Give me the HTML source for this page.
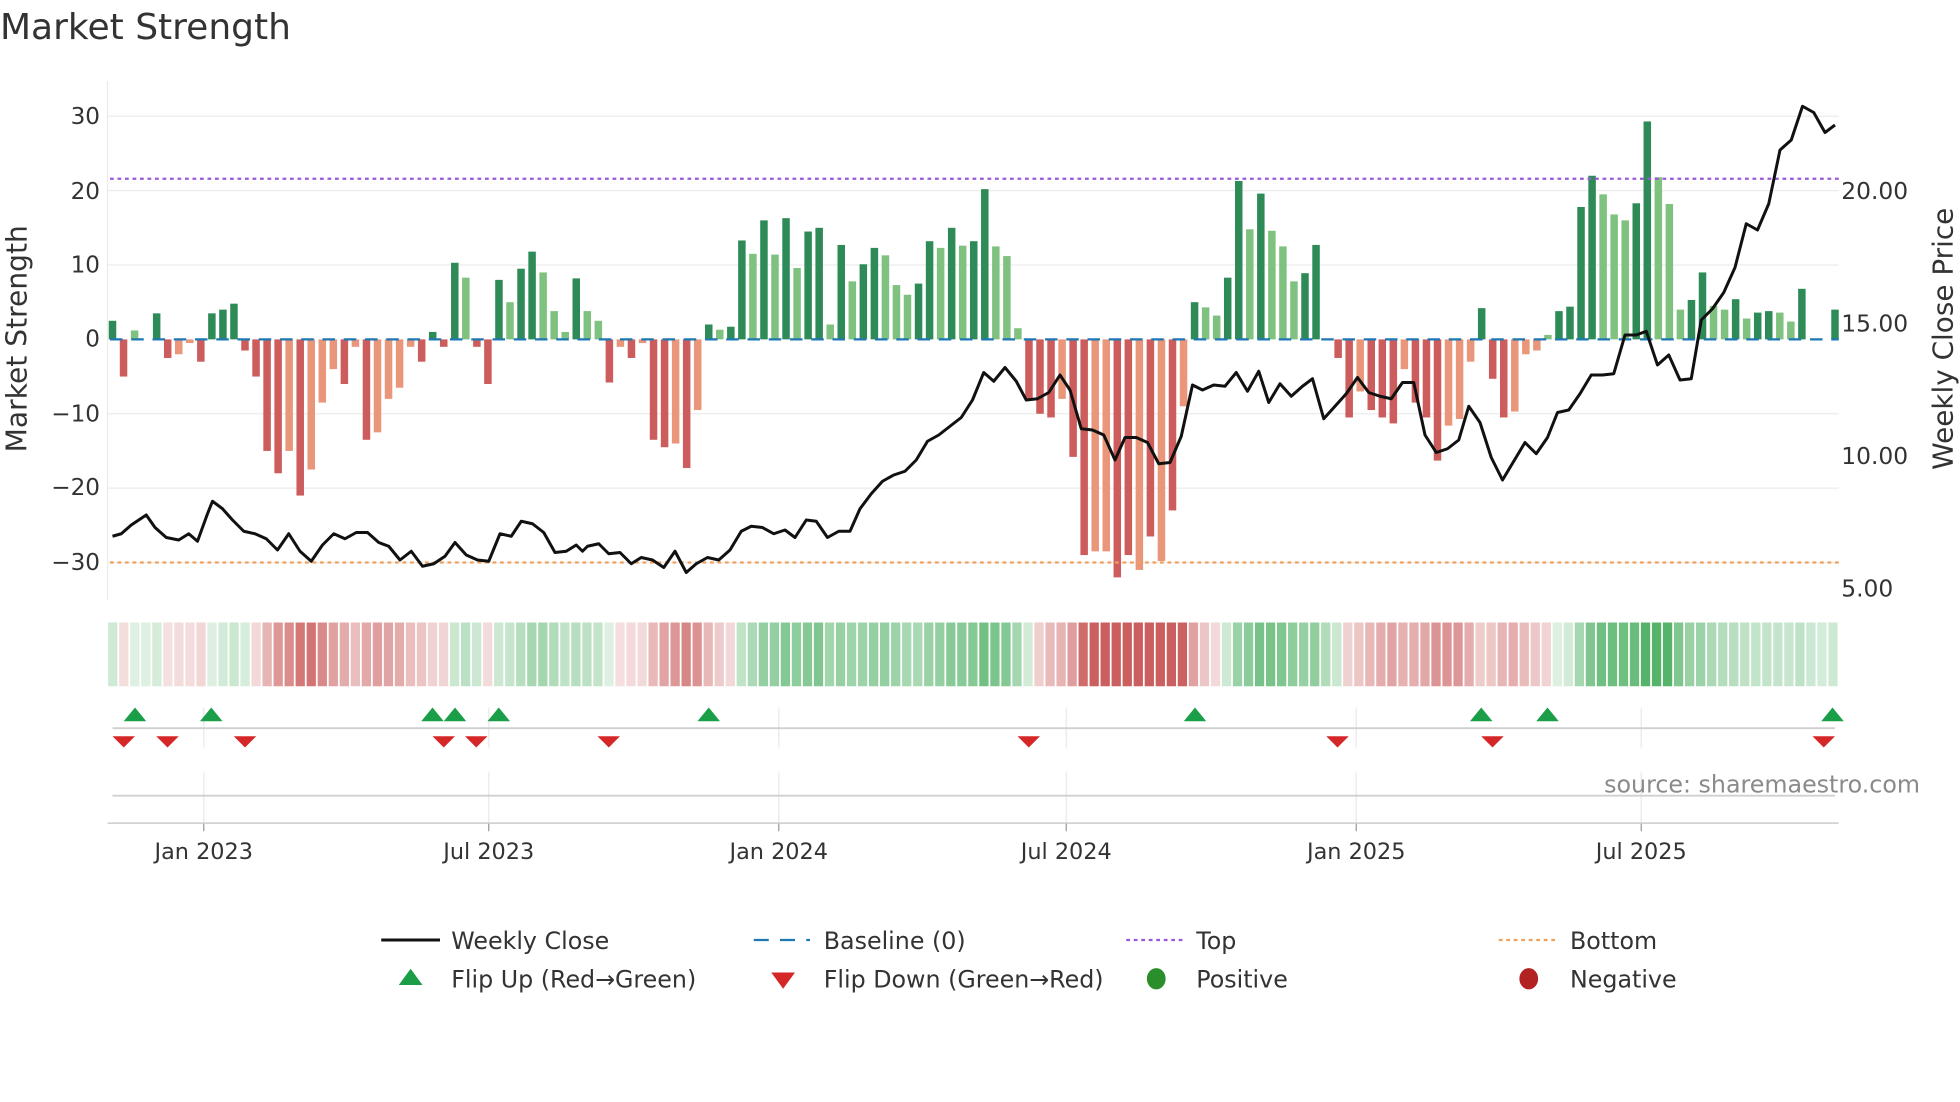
<!DOCTYPE html>
<html><head><meta charset="utf-8"><style>
html,body{margin:0;padding:0;background:#fff;width:1960px;height:1102px;overflow:hidden}
svg{display:block}
text{font-family:"DejaVu Sans","Liberation Sans",sans-serif;fill:#333}
</style></head><body>
<svg id="s" width="1960" height="1102" viewBox="0 0 1568 881.6" xmlns="http://www.w3.org/2000/svg">
<text x="0" y="31" font-size="28.8">Market Strength</text>
<g id="grid"></g>
<g id="heat"></g>
<g id="bars"></g>
<line x1="88" x2="1471" y1="271.5" y2="271.5" stroke="#1f77b4" stroke-width="1.8" stroke-dasharray="10,7"/>
<line x1="88" x2="1471" y1="143" y2="143" stroke="#9b59d9" stroke-width="1.8" stroke-dasharray="3,3"/>
<line x1="88" x2="1471" y1="450" y2="450" stroke="#f0a05a" stroke-width="1.8" stroke-dasharray="3,3"/>
<polyline id="price" fill="none" stroke="#111" stroke-width="2.4" stroke-linejoin="round"/>
<g id="flips"></g>
<g font-size="18.5" text-anchor="end">
<text x="80" y="99">30</text><text x="80" y="159">20</text><text x="80" y="218">10</text><text x="80" y="277">0</text>
<text x="80" y="337">−10</text><text x="80" y="396">−20</text><text x="80" y="456">−30</text>
</g>
<g font-size="18.7">
<text x="1473" y="159">20.00</text><text x="1473" y="265">15.00</text><text x="1473" y="371">10.00</text><text x="1473" y="477">5.00</text>
</g>
<text transform="translate(21,271) rotate(-90)" font-size="22.5" text-anchor="middle">Market Strength</text>
<text transform="translate(1562,271) rotate(-90)" font-size="22.3" text-anchor="middle">Weekly Close Price</text>
<text x="1536" y="634" font-size="19" text-anchor="end" style="fill:#8a8a8a">source: sharemaestro.com</text>
<g font-size="17.9" text-anchor="middle">
<text x="163" y="687">Jan 2023</text><text x="391" y="687">Jul 2023</text><text x="623" y="687">Jan 2024</text>
<text x="853" y="687">Jul 2024</text><text x="1085" y="687">Jan 2025</text><text x="1313" y="687">Jul 2025</text>
</g>
<g font-size="19">
<line x1="305" x2="352" y1="752" y2="752" stroke="#111" stroke-width="2.4"/><text x="361" y="759">Weekly Close</text>
<line x1="603" x2="648" y1="752" y2="752" stroke="#1f77b4" stroke-width="1.8" stroke-dasharray="12,9"/><text x="659" y="759">Baseline (0)</text>
<line x1="901" x2="946" y1="752" y2="752" stroke="#9b59d9" stroke-width="1.8" stroke-dasharray="3,3"/><text x="957" y="759">Top</text>
<line x1="1199" x2="1244" y1="752" y2="752" stroke="#f0a05a" stroke-width="1.8" stroke-dasharray="3,3"/><text x="1256" y="759">Bottom</text>
<polygon points="319,788 338,788 328.5,775" fill="#1a9e47"/><text x="361" y="790">Flip Up (Red→Green)</text>
<polygon points="617,778 636,778 626.5,791" fill="#d62728"/><text x="659" y="790">Flip Down (Green→Red)</text>
<ellipse cx="925" cy="783" rx="7.5" ry="8.5" fill="#2a8f2a"/><text x="957" y="790">Positive</text>
<ellipse cx="1223" cy="783" rx="7.5" ry="8.5" fill="#b22222"/><text x="1256" y="790">Negative</text>
</g>
</svg>
<script>
const NS="http://www.w3.org/2000/svg";
function el(p,t,a){const e=document.createElementNS(NS,t);for(const k in a)e.setAttribute(k,a[k]);p.appendChild(e);return e;}
const V=[2.5,-5,1.2,0,3.5,-2.5,-2,-0.5,-3,3.5,4,4.8,-1.5,-5,-15,-18,-15,-21,-17.5,-8.5,-4,-6,-1,-13.5,-12.5,-8,-6.5,-1,-3,1,-1,10.3,8.3,-1,-6,8,5,9.5,11.8,9,3.8,1,8.2,3.8,2.5,-5.8,-1,-2.5,-0.5,-13.5,-14.5,-14,-17.3,-9.5,2,1.3,1.7,13.3,11.5,16,11.4,16.3,9.6,14.5,15,2,12.7,7.8,10.1,12.3,11.3,7.3,6,7.5,13.2,12.3,15,12.6,13.2,20.2,12.5,11.2,1.5,
-8,-10,-10.5,-8,-15.8,-29,-28.5,-28.5,-32,-29,-31,-26.5,-29.8,-23,-9,
5,4.3,3.2,8.3,21.3,14.8,19.6,14.6,12.5,7.8,8.9,12.7,
0,-2.5,-10.5,-7,-9.5,-10.5,-11.3,-4,-8.5,-10.5,-16.3,-11.6,-10.7,-3,
4.2,-5.3,-10.5,-9.7,-2,-1.5,0.6,
3.8,4.4,17.8,22,19.5,16.8,16,18.3,29.3,21.8,18.2,
4,5.3,9,4.5,4,5.4,2.8,3.6,3.8,3.6,2.4,6.8,0,0,4];
const L=new Set([2,6,7,16,18,19,20,22,24,25,26,27,32,36,39,40,41,43,44,46,48,51,53,55,58,60,62,65,67,70,71,72,75,77,80,81,82,86,89,90,93,95,97,99,100,103,105,106,107,113,117,121,122,123,127,128,129,130,135,136,137,140,141,142,145,146,148,151,152]);
const N=V.length,sp=(1468-90)/(N-1);
const X=i=>90+i*sp, Y=v=>271.5-v*5.95;
const g=document.getElementById('grid');
[30,20,10,-10,-20,-30].forEach(v=>el(g,'line',{x1:86,x2:1471,y1:Y(v),y2:Y(v),stroke:'#ececec','stroke-width':1}));
el(g,'line',{x1:86,x2:86,y1:65,y2:480,stroke:'#ececec'});
[163,391,623,853,1085,1313].forEach(x=>{el(g,'line',{x1:x,x2:x,y1:566,y2:598,stroke:'#e8e8ee'});el(g,'line',{x1:x,x2:x,y1:618,y2:658,stroke:'#e8e8ee'});el(g,'line',{x1:x,x2:x,y1:658,y2:665,stroke:'#999'});});
el(g,'line',{x1:90,x2:1468,y1:582.5,y2:582.5,stroke:'#d0d0d0','stroke-width':1.5});
el(g,'line',{x1:90,x2:1468,y1:636.5,y2:636.5,stroke:'#d0d0d0','stroke-width':1.5});
el(g,'line',{x1:86,x2:1471,y1:658.5,y2:658.5,stroke:'#ccc','stroke-width':1.2});
const b=document.getElementById('bars');
V.forEach((v,i)=>{if(v===0)return;const l=L.has(i);const c=v>0?(l?'#7fc27f':'#2e8b57'):(l?'#e9967a':'#cd5c5c');
const y=Y(Math.max(v,0)),h=Math.abs(v)*5.95;el(b,'rect',{x:X(i)-3,y:y,width:6,height:h,fill:c});});
const hm=document.getElementById('heat');let e=0;const cw=(1471-86)/N;
V.forEach((v,i)=>{e=i===0?v:e*0.6+v*0.4;const a=Math.min(0.95,0.18+Math.abs(e)/26);
let c;if(e>=0){const r=Math.round(255-(255-76)*a),gg=Math.round(255-(255-175)*a),bb=Math.round(255-(255-98)*a);c=`rgb(${r},${gg},${bb})`;}
else{const r=Math.round(255-(255-200)*a),gg=Math.round(255-(255-85)*a),bb=Math.round(255-(255-85)*a);c=`rgb(${r},${gg},${bb})`;}
el(hm,'rect',{x:86+i*cw+0.5,y:498,width:cw-1.4,height:51,fill:c});});
const P=[[90,429],[97,427],[105,420],[117,412],[124,422],[133,430],[143,432],[151,427],[158,433],[166,411],[170,401],[178,407],[186,416],[195,425],[204,427],[213,431],[222,440],[231,427],[240,441],[249,449],[258,436],[267,427],[276,431],[285,426],[294,426],[303,434],[311,437],[320,448],[329,441],[338,453],[347,451],[356,445],[364,434],[373,444],[382,448],[391,449],[400,427],[409,429],[417,417],[426,419],[435,426],[444,442],[453,441],[461,436],[466,441],[470,437],[479,435],[487,443],[496,442],[505,451],[513,446],[522,448],[531,454],[540,441],[549,458],[557,451],[566,446],[575,448],[584,440],[593,425],[601,421],[610,422],[619,427],[628,424],[636,430],[645,416],[653,417],[662,430],[671,425],[680,425],[688,407],[697,395],[706,385],[715,380],[724,377],[733,368],[742,353],[751,348],[760,341],[769,334],[778,320],[787,298],[795,305],[804,294],[813,305],[821,320],[830,319],[839,314],[848,300],[856,312],[865,343],[874,344],[883,348],[892,368],[900,350],[909,350],[918,354],[927,371],[936,370],[945,349],[954,308],[962,312],[971,308],[980,309],[989,298],[998,313],[1007,297],[1015,322],[1024,307],[1033,317],[1042,309],[1050,303],[1059,335],[1068,325],[1077,315],[1086,302],[1095,314],[1104,317],[1113,319],[1122,306],[1131,306],[1140,348],[1149,362],[1158,359],[1167,352],[1175,325],[1184,338],[1193,366],[1202,384],[1211,369],[1220,354],[1229,363],[1238,350],[1246,330],[1255,328],[1264,315],[1273,300],[1282,300],[1291,299],[1300,268],[1309,268],[1317,265],[1326,292],[1335,284],[1344,304],[1353,303],[1361,256],[1370,247],[1379,234],[1388,214],[1397,179],[1406,184],[1415,163],[1424,120],[1433,112],[1442,85],[1451,90],[1460,106],[1468,100]];
document.getElementById('price').setAttribute('points',P.map(p=>p.join(',')).join(' '));
const f=document.getElementById('flips');
[108,169,346,364,399,567,956,1185,1238,1466].forEach(x=>el(f,'polygon',{points:`${x-9},577 ${x+9},577 ${x},566`,fill:'#1a9e47'}));
[99,134,196,355,381,487,823,1070,1194,1459].forEach(x=>el(f,'polygon',{points:`${x-9},589 ${x+9},589 ${x},598`,fill:'#d62728'}));
</script>
</body></html>
